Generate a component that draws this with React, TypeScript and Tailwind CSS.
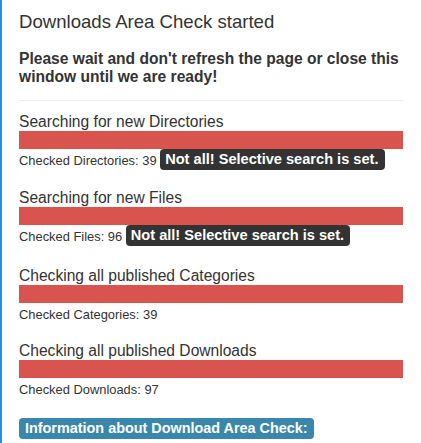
const sections = [
  { title: 'Searching for new Directories', label: 'Checked Directories: 39', selective: true, space: '' },
  { title: 'Searching for new Files', label: 'Checked Files: 96', selective: true, space: 'mt-[17px]' },
  { title: 'Checking all published Categories', label: 'Checked Categories: 39', selective: false, space: 'mt-[19px]' },
  { title: 'Checking all published Downloads', label: 'Checked Downloads: 97', selective: false, space: 'mt-[16px]' },
];

export default function App() {
  return (
    <div
      className="min-h-[443px] w-[421px] border-l-2 border-[#2a8de6] bg-white pl-[17px] pr-[18px] text-[#333]"
      style={{ fontFamily: '"Liberation Sans", Arial, sans-serif' }}
    >
      <h3 className="pt-[12px] text-[18.6px] leading-[20px]">Downloads Area Check started</h3>
      <p className="mt-[18px] text-[15.6px] font-bold leading-[18px]">
        Please wait and don't refresh the page or close this window until we are ready!
      </p>
      <hr className="mt-[14px] mr-[-1px] border-t border-[#eee]" />

      <div className="mt-[12px]">
        {sections.map((s) => (
          <div key={s.title} className={s.space}>
            <div className="h-[18px] text-[15.6px] leading-[18px]">{s.title}</div>
            <div className="h-[18px] w-full bg-[#d9534f]" />
            <div className="h-[23px] whitespace-nowrap text-[12.9px] leading-[23px]">
              {s.label}{' '}
              {s.selective && (
                <span className="inline-block h-[21px] rounded-[4px] bg-[#333] pl-[5px] pr-[6px] align-top text-[14.6px] font-bold leading-[21px] text-white">
                  Not all! Selective search is set.
                </span>
              )}
            </div>
          </div>
        ))}
      </div>

      <div className="mt-[17px]">
        <span className="inline-block h-[21px] rounded-[4px] bg-[#3a87ad] px-[6px] align-top text-[14.4px] font-bold leading-[21px] text-white">
          Information about Download Area Check:
        </span>
      </div>
    </div>
  );
}
